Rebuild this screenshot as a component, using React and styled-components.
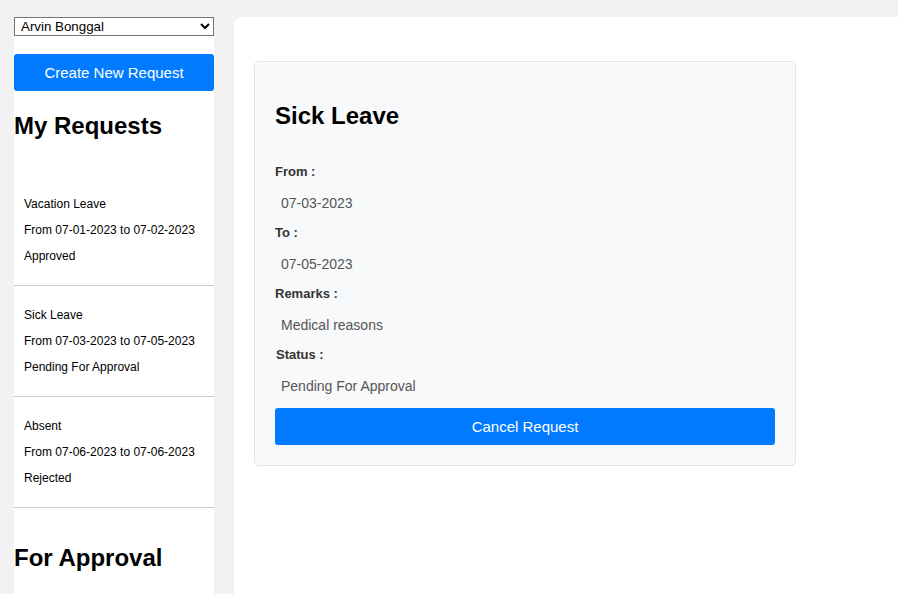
import React, { useState } from "react";
import styled, { createGlobalStyle } from "styled-components";

const GlobalStyle = createGlobalStyle`
  html, body {
    margin: 0;
    padding: 0;
    background: #f2f2f2;
    font-family: "Liberation Sans", Arial, sans-serif;
    overflow: hidden;
  }
`;

const Page = styled.div`
  display: flex;
  gap: 20px;
  padding: 17px 0 0 14px;
  height: 594px;
  box-sizing: border-box;
`;

const Sidebar = styled.aside`
  display: flex;
  flex-direction: column;
  width: 200px;
  flex-shrink: 0;
  background: #ffffff;
`;

const UserSelect = styled.select`
  width: 200px;
  height: 19px;
  font-family: "Liberation Sans", Arial, sans-serif;
  font-size: 13.33px;
  color: #000;
  background: #fff;
  border: 1px solid #767676;
  border-radius: 0;
  padding: 0 0 0 2px;
  margin: 0;
`;

const BlueButton = styled.button`
  display: block;
  width: 100%;
  height: 37px;
  margin-top: ${(p) => p.$top || 0}px;
  background: #007bff;
  color: #ffffff;
  border: none;
  border-radius: 3px;
  font-family: "Liberation Sans", Arial, sans-serif;
  font-size: 15px;
  cursor: pointer;
`;

const SideHeading = styled.h2`
  font-size: 24px;
  font-weight: bold;
  margin: ${(p) => p.$top || 21}px 0 19px;
  line-height: 28px;
  color: #000;
`;

const RequestList = styled.ul`
  list-style: none;
  margin: 16px 0;
  padding: 0;
`;

const RequestItem = styled.li`
  padding: 10px;
  border-bottom: 1px solid #cccccc;
  cursor: pointer;
`;

const ItemLine = styled.p`
  margin: 12px 0;
  font-size: 12px;
  line-height: 14px;
  color: #000;
`;

const Main = styled.main`
  flex: 1;
  background: #ffffff;
  border-radius: 8px 0 0 0;
  padding: 44px 0 0 20px;
`;

const Card = styled.section`
  width: 500px;
  padding: 20px;
  background: #f8f9fa;
  border: 1px solid #e2e4e7;
  border-radius: 5px;
`;

const CardTitle = styled.h2`
  font-size: 24px;
  line-height: 28px;
  font-weight: bold;
  margin: 20px 0 34px;
  color: #000;
`;

const Field = styled.div`
  margin-bottom: 6px;
`;

const Label = styled.label`
  display: block;
  font-size: 13px;
  line-height: 15px;
  font-weight: bold;
  color: #333;
  margin-bottom: 8px;
  padding-left: ${(p) => p.$shift || 0}px;
`;

const Value = styled.div`
  font-size: 14px;
  line-height: 16px;
  padding: 8px 6px;
  color: #555;
`;

const requests = [
  { type: "Vacation Leave", from: "07-01-2023", to: "07-02-2023", status: "Approved" },
  { type: "Sick Leave", from: "07-03-2023", to: "07-05-2023", status: "Pending For Approval" },
  { type: "Absent", from: "07-06-2023", to: "07-06-2023", status: "Rejected" },
];

const App = () => {
  const [selected, setSelected] = useState(1);
  const req = requests[selected];

  const details = [
    { label: "From :", value: req.from },
    { label: "To :", value: req.to },
    { label: "Remarks :", value: "Medical reasons" },
    { label: "Status :", value: req.status, shift: 1 },
  ];

  return (
    <>
      <GlobalStyle />
      <Page>
        <Sidebar>
          <UserSelect defaultValue="arvin">
            <option value="arvin">Arvin Bonggal</option>
          </UserSelect>
          <BlueButton $top={18}>Create New Request</BlueButton>
          <SideHeading>My Requests</SideHeading>
          <RequestList>
            {requests.map((r, i) => (
              <RequestItem key={r.type} onClick={() => setSelected(i)}>
                <ItemLine>{r.type}</ItemLine>
                <ItemLine>
                  From {r.from} to {r.to}
                </ItemLine>
                <ItemLine>{r.status}</ItemLine>
              </RequestItem>
            ))}
          </RequestList>
          <SideHeading $top={20}>For Approval</SideHeading>
        </Sidebar>
        <Main>
          <Card>
            <CardTitle>{req.type}</CardTitle>
            {details.map((d) => (
              <Field key={d.label}>
                <Label $shift={d.shift}>{d.label}</Label>
                <Value>{d.value}</Value>
              </Field>
            ))}
            <BlueButton>Cancel Request</BlueButton>
          </Card>
        </Main>
      </Page>
    </>
  );
};

export default App;
